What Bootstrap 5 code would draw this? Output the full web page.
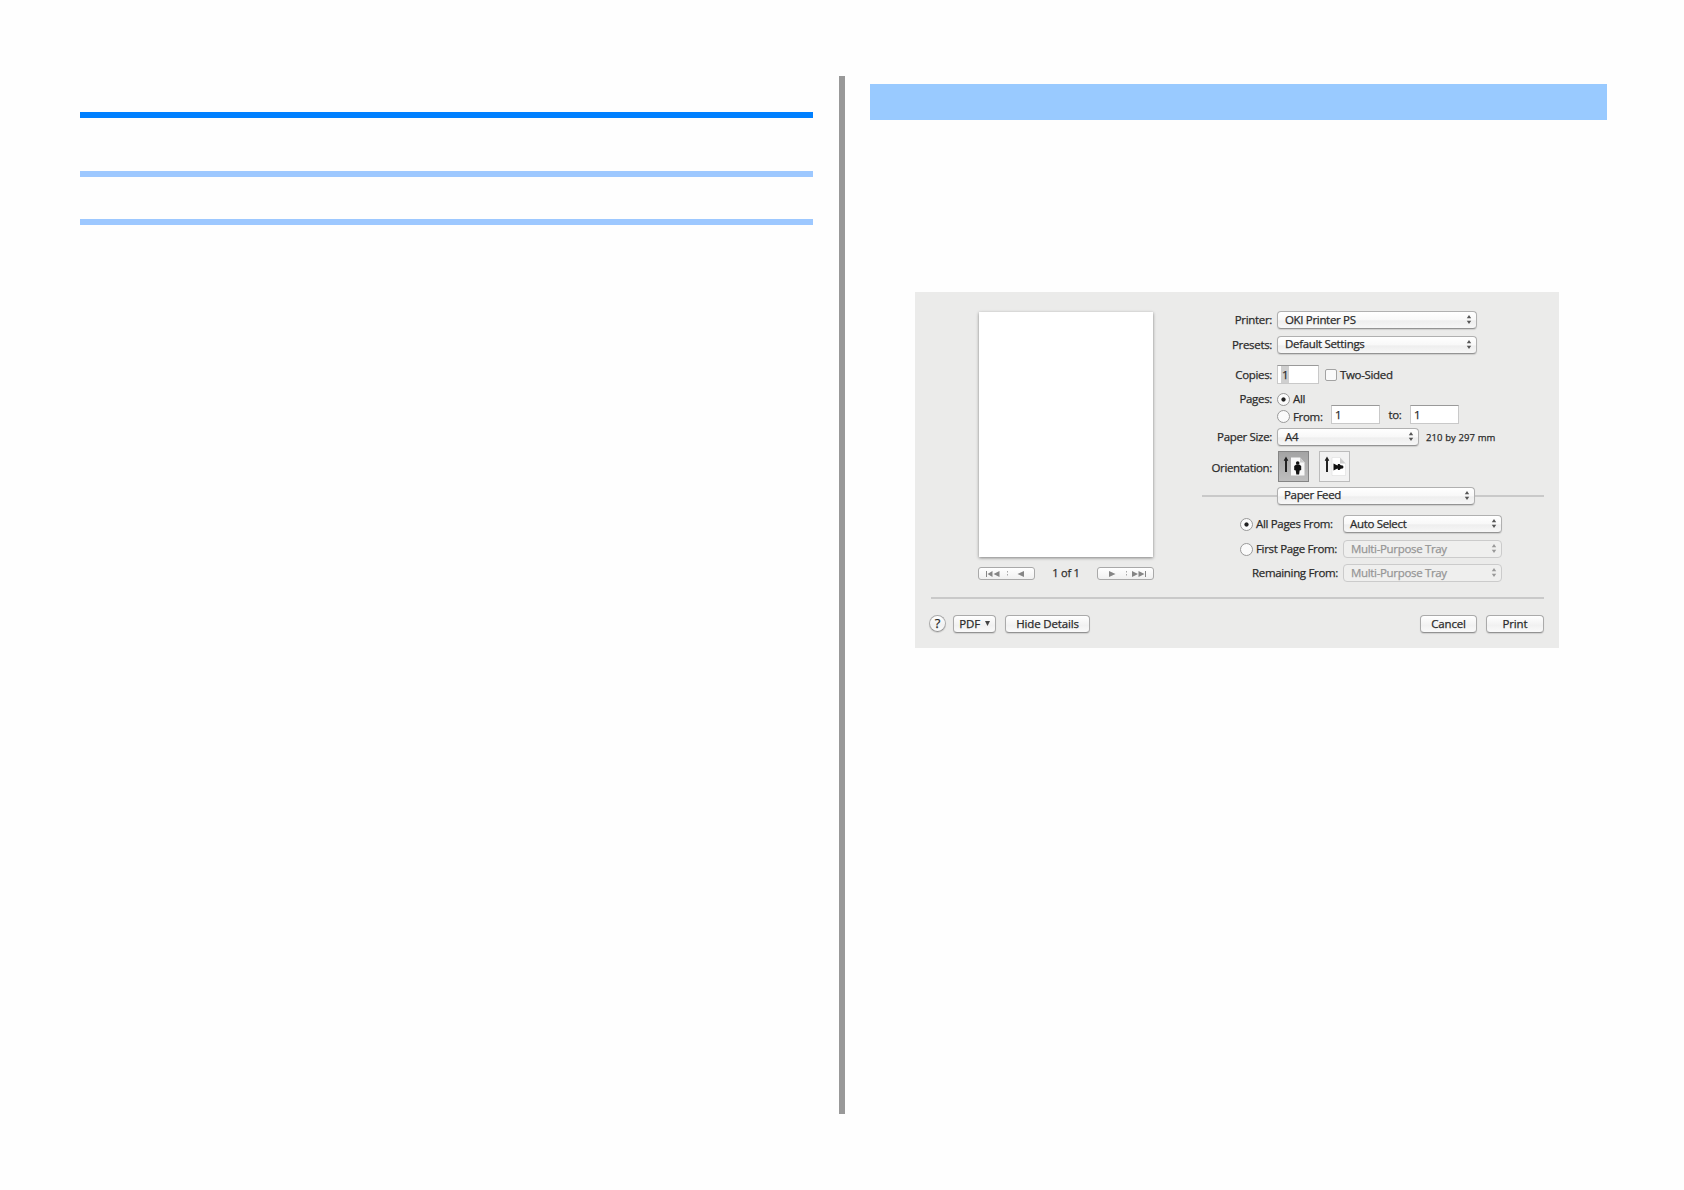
<!DOCTYPE html>
<html lang="en">
<head>
  <meta charset="UTF-8" />
  <meta name="viewport" content="width=device-width, initial-scale=1.0"/>
  <title>Paper Feed | OKI Printer PS</title>
  <link href="https://cdn.jsdelivr.net/npm/bootstrap@5.3.3/dist/css/bootstrap.min.css" rel="stylesheet"/>
  <style>
    body {
      background: #fefefe;
      height: 1190px;
      overflow: hidden;
    }

    /* Manual spread */
    .spread { padding: 76px 77px 0 79.5px; }
    .page-left { width: 733.5px; padding-top: 36px; }
    .rule { height: 6px; background: #9dc8ff; }
    .rule-main { background: #0080ff; margin-bottom: 53px; }
    .rule-gap { margin-bottom: 42px; }
    .page-divider { width: 6px; height: 1038px; background: #999; margin: 0 25px 0 26px; }
    .page-right { width: 737px; padding-top: 8px; }
    .title-band { height: 36px; background: #99caff; margin-bottom: 172px; }

    /* Print dialog */
    .print-dialog {
      width: 644px;
      height: 356px;
      margin-left: 45px;
      background: #ebebea;
      color: #2b2b2b;
      font-family: "Open Sans", "Noto Sans", sans-serif;
      font-size: 11.5px;
      font-weight: 500;
      letter-spacing: -.33px;
      line-height: 16px;
      white-space: nowrap;
      -webkit-text-stroke: .25px;
    }
    .pane-preview { width: 287px; padding: 20px 0 0 64px; }
    .sheet { width: 174px; height: 245px; background: #fff; box-shadow: 0 1px 3px rgba(0, 0, 0, .45); }
    .pager { width: 176px; margin: 8px 0 0 -1px; font-size: 11px; letter-spacing: -.2px; }
    .pane-settings { width: 342px; height: 305px; padding-top: 16px; }

    .line { display: flex; align-items: center; flex: none; }
    .line-label { width: 70px; margin-right: 5px; text-align: right; flex: none; }
    .size-note { font-size: 9.5px; letter-spacing: .1px; margin: 1px 0 0 7px; }
    .feed { padding-left: 38px; }
    .feed-label { width: 87px; }

    .popup {
      display: flex;
      align-items: center;
      justify-content: space-between;
      flex: none;
      height: 18px;
      padding: 0 4px 1px 7px;
      border: 1px solid #b0b0b0;
      border-bottom-color: #949494;
      border-radius: 4px;
      background: linear-gradient(#fff, #f8f8f8 50%, #eeeeee 55%, #f7f7f7);
      box-shadow: 0 1px 1px rgba(0, 0, 0, .13);
    }
    .popup.off { color: #969696; border-color: #cbcbcb; background: #efefee; box-shadow: none; }
    .popup svg { width: 6px; height: 9px; fill: #555; }
    .popup.off svg { fill: #999; }

    .push {
      height: 18px;
      padding: 0;
      font: inherit;
      color: inherit;
      letter-spacing: -.15px;
      line-height: 15px;
      border: 1px solid #aaa;
      border-bottom-color: #929292;
      border-radius: 4px;
      background: linear-gradient(#fff, #f1f1f1 60%, #fafafa);
      box-shadow: 0 1px 1px rgba(0, 0, 0, .12);
    }
    .help { width: 17px; height: 17px; border-radius: 50%; font-size: 13px; }

    .entry { height: 19px; padding: 0 3px; line-height: 17px; background: #fff; border: 1px solid #c9c9c9; border-top-color: #999; }
    .entry span { background: #cfcfcf; padding: 1px 1px 1px 1px; }
    .radio { width: 13px; height: 13px; border-radius: 50%; border: 1px solid #999; background: #fafafa; margin-right: 3px; flex: none; }
    .radio.on { background: radial-gradient(circle, #222 0 1.7px, #fafafa 2.5px); }
    .tick { width: 12px; height: 12px; border: 1px solid #a3a3a3; border-radius: 2px; background: #fafafa; margin: 0 3px 0 6px; }

    .orient { width: 31px; height: 31px; border: 1px solid #bcbcbc; background: #f2f2f2; flex: none; margin: 2px 10px 0 1px; }
    .orient + .orient { margin-left: 0; }
    .orient.on { border-color: #858585; background: linear-gradient(#a4a4a4, #bebebe); }
    .orient svg { display: block; width: 29px; height: 29px; }

    .hair { height: 2px; background: #c9c9c9; }
    .seg { width: 57px; height: 13px; border: 1px solid #a9a9a9; border-radius: 3px; background: linear-gradient(#fff, #f0f0f0); }
    .seg svg { display: block; width: 55px; height: 11px; fill: #858585; }
  </style>
</head>
<body>
<svg class="d-none">
  <symbol id="arrows" viewBox="0 0 6 9"><path d="M3 0 5.2 3.3H.8zM3 9 .8 5.7h4.4z"/></symbol>
</svg>

<main class="spread d-flex">
  <section class="page-left">
    <div class="rule rule-main"></div>
    <div class="rule rule-gap"></div>
    <div class="rule"></div>
  </section>
  <div class="page-divider"></div>

  <section class="page-right">
    <div class="title-band"></div>

    <div class="print-dialog">
      <div class="d-flex">
        <!-- Preview -->
        <div class="pane-preview">
          <div class="sheet"></div>
          <div class="pager d-flex align-items-center justify-content-between">
            <div class="seg">
              <svg viewBox="0 0 55 11"><path d="M7 3h1v6H7zM13.500 3v6L8.500 6zM20.500 3v6l-6-3zM28 3h.7v1.500H28zM28 6h.7v1.500H28zM45 3v6l-6.500-3z"/></svg>
            </div>
            <span>1 of 1</span>
            <div class="seg">
              <svg viewBox="0 0 55 11"><path d="M11 3v6l6.500-3zM28 3h.7v1.500H28zM28 6h.7v1.500H28zM34 3v6l6-3zM40.500 3v6l6-3zM47 3h1v6h-1z"/></svg>
            </div>
          </div>
        </div>

        <!-- Settings -->
        <div class="pane-settings d-flex flex-column">
          <div class="line" style="height:24px">
            <span class="line-label">Printer:</span>
            <div class="popup" style="width:200px">OKI Printer PS<svg><use href="#arrows"/></svg></div>
          </div>
          <div class="line" style="height:25px">
            <span class="line-label">Presets:</span>
            <div class="popup" style="width:200px">Default Settings<svg><use href="#arrows"/></svg></div>
          </div>
          <div class="line" style="height:35px">
            <span class="line-label">Copies:</span>
            <div class="entry" style="width:42px"><span>1</span></div>
            <div class="tick"></div>Two-Sided
          </div>
          <div class="line" style="height:14px">
            <span class="line-label">Pages:</span>
            <div class="radio on"></div>All
          </div>
          <div class="line" style="height:17px">
            <span class="line-label"></span>
            <div class="radio mt-1"></div><span class="mt-1" style="width:38px">From:</span>
            <div class="entry" style="width:49px">1</div>
            <span class="text-center" style="width:30px">to:</span>
            <div class="entry" style="width:49px">1</div>
          </div>
          <div class="line" style="height:28px">
            <span class="line-label">Paper Size:</span>
            <div class="popup" style="width:142px">A4<svg><use href="#arrows"/></svg></div>
            <span class="size-note">210 by 297 mm</span>
          </div>
          <div class="line" style="height:29px">
            <span class="line-label pt-1">Orientation:</span>
            <div class="orient on">
              <svg viewBox="0 0 29 29">
                <path d="M12 5.500h9l4.500 5V23.500H12z" fill="#f8f8f8"/><path d="M21 5.500v5h4.500z" fill="#ccc"/>
                <path d="M7 4.500 9.300 8.500 8 9v11H6V9L4.700 8.500z" fill="#222"/>
                <circle cx="18.700" cy="11" r="1.800" fill="#111"/>
                <path d="M17.200 12.500h3l2 1.500v4l-1.600.5-.5 4h-2.800l-.5-4-1.600-.5v-4z" fill="#111"/>
              </svg>
            </div>
            <div class="orient">
              <svg viewBox="0 0 29 29">
                <path d="M12 5.500h8l5.500 6V23.500H12z" fill="#fff" stroke="#ddd" stroke-width=".6"/><path d="M20 5.500v6h5.500z" fill="#ccc"/>
                <path d="M7 4.500 9.300 8.500 8 9v11H6V9L4.700 8.500z" fill="#222"/>
                <circle cx="21.700" cy="15" r="1.800" fill="#111"/>
                <path d="M13.500 11.500l4 2 .5-1.500h1.500l1.500 1.600v2.800L19.500 18H18l-.5-1.500-4 2z" fill="#111"/>
              </svg>
            </div>
          </div>
          <div class="line" style="height:31px">
            <div class="hair" style="width:75px"></div>
            <div class="popup" style="width:198px;padding-left:6px">Paper Feed<svg><use href="#arrows"/></svg></div>
            <div class="hair flex-fill"></div>
          </div>
          <div class="line feed" style="height:26px">
            <div class="radio on"></div><span class="feed-label">All Pages From:</span>
            <div class="popup" style="width:159px;padding-left:6px">Auto Select<svg><use href="#arrows"/></svg></div>
          </div>
          <div class="line feed" style="height:24px">
            <div class="radio"></div><span class="feed-label">First Page From:</span>
            <div class="popup off" style="width:159px">Multi-Purpose Tray<svg><use href="#arrows"/></svg></div>
          </div>
          <div class="line feed" style="height:24px">
            <span class="feed-label text-end" style="width:98px;margin-right:5px">Remaining From:</span>
            <div class="popup off" style="width:159px">Multi-Purpose Tray<svg><use href="#arrows"/></svg></div>
          </div>
        </div>
      </div>

      <!-- Footer -->
      <div class="hair" style="margin:0 15px 0 16px"></div>
      <div class="d-flex align-items-center" style="height:49px;padding:0 15px 0 14px">
        <button class="push help">?</button>
        <button class="push" style="width:43px;margin-left:7px">PDF <svg width="5" height="5" viewBox="0 0 5 5" style="margin:-2px 0 0 2px"><path d="M0 0h5L2.500 5z" fill="#444"/></svg></button>
        <button class="push" style="width:85px;margin-left:9px">Hide Details</button>
        <button class="push ms-auto" style="width:57px;margin-right:9px">Cancel</button>
        <button class="push" style="width:58px">Print</button>
      </div>
    </div>
  </section>
</main>
<script src="https://cdn.jsdelivr.net/npm/bootstrap@5.3.3/dist/js/bootstrap.bundle.min.js"></script>
</body>
</html>
